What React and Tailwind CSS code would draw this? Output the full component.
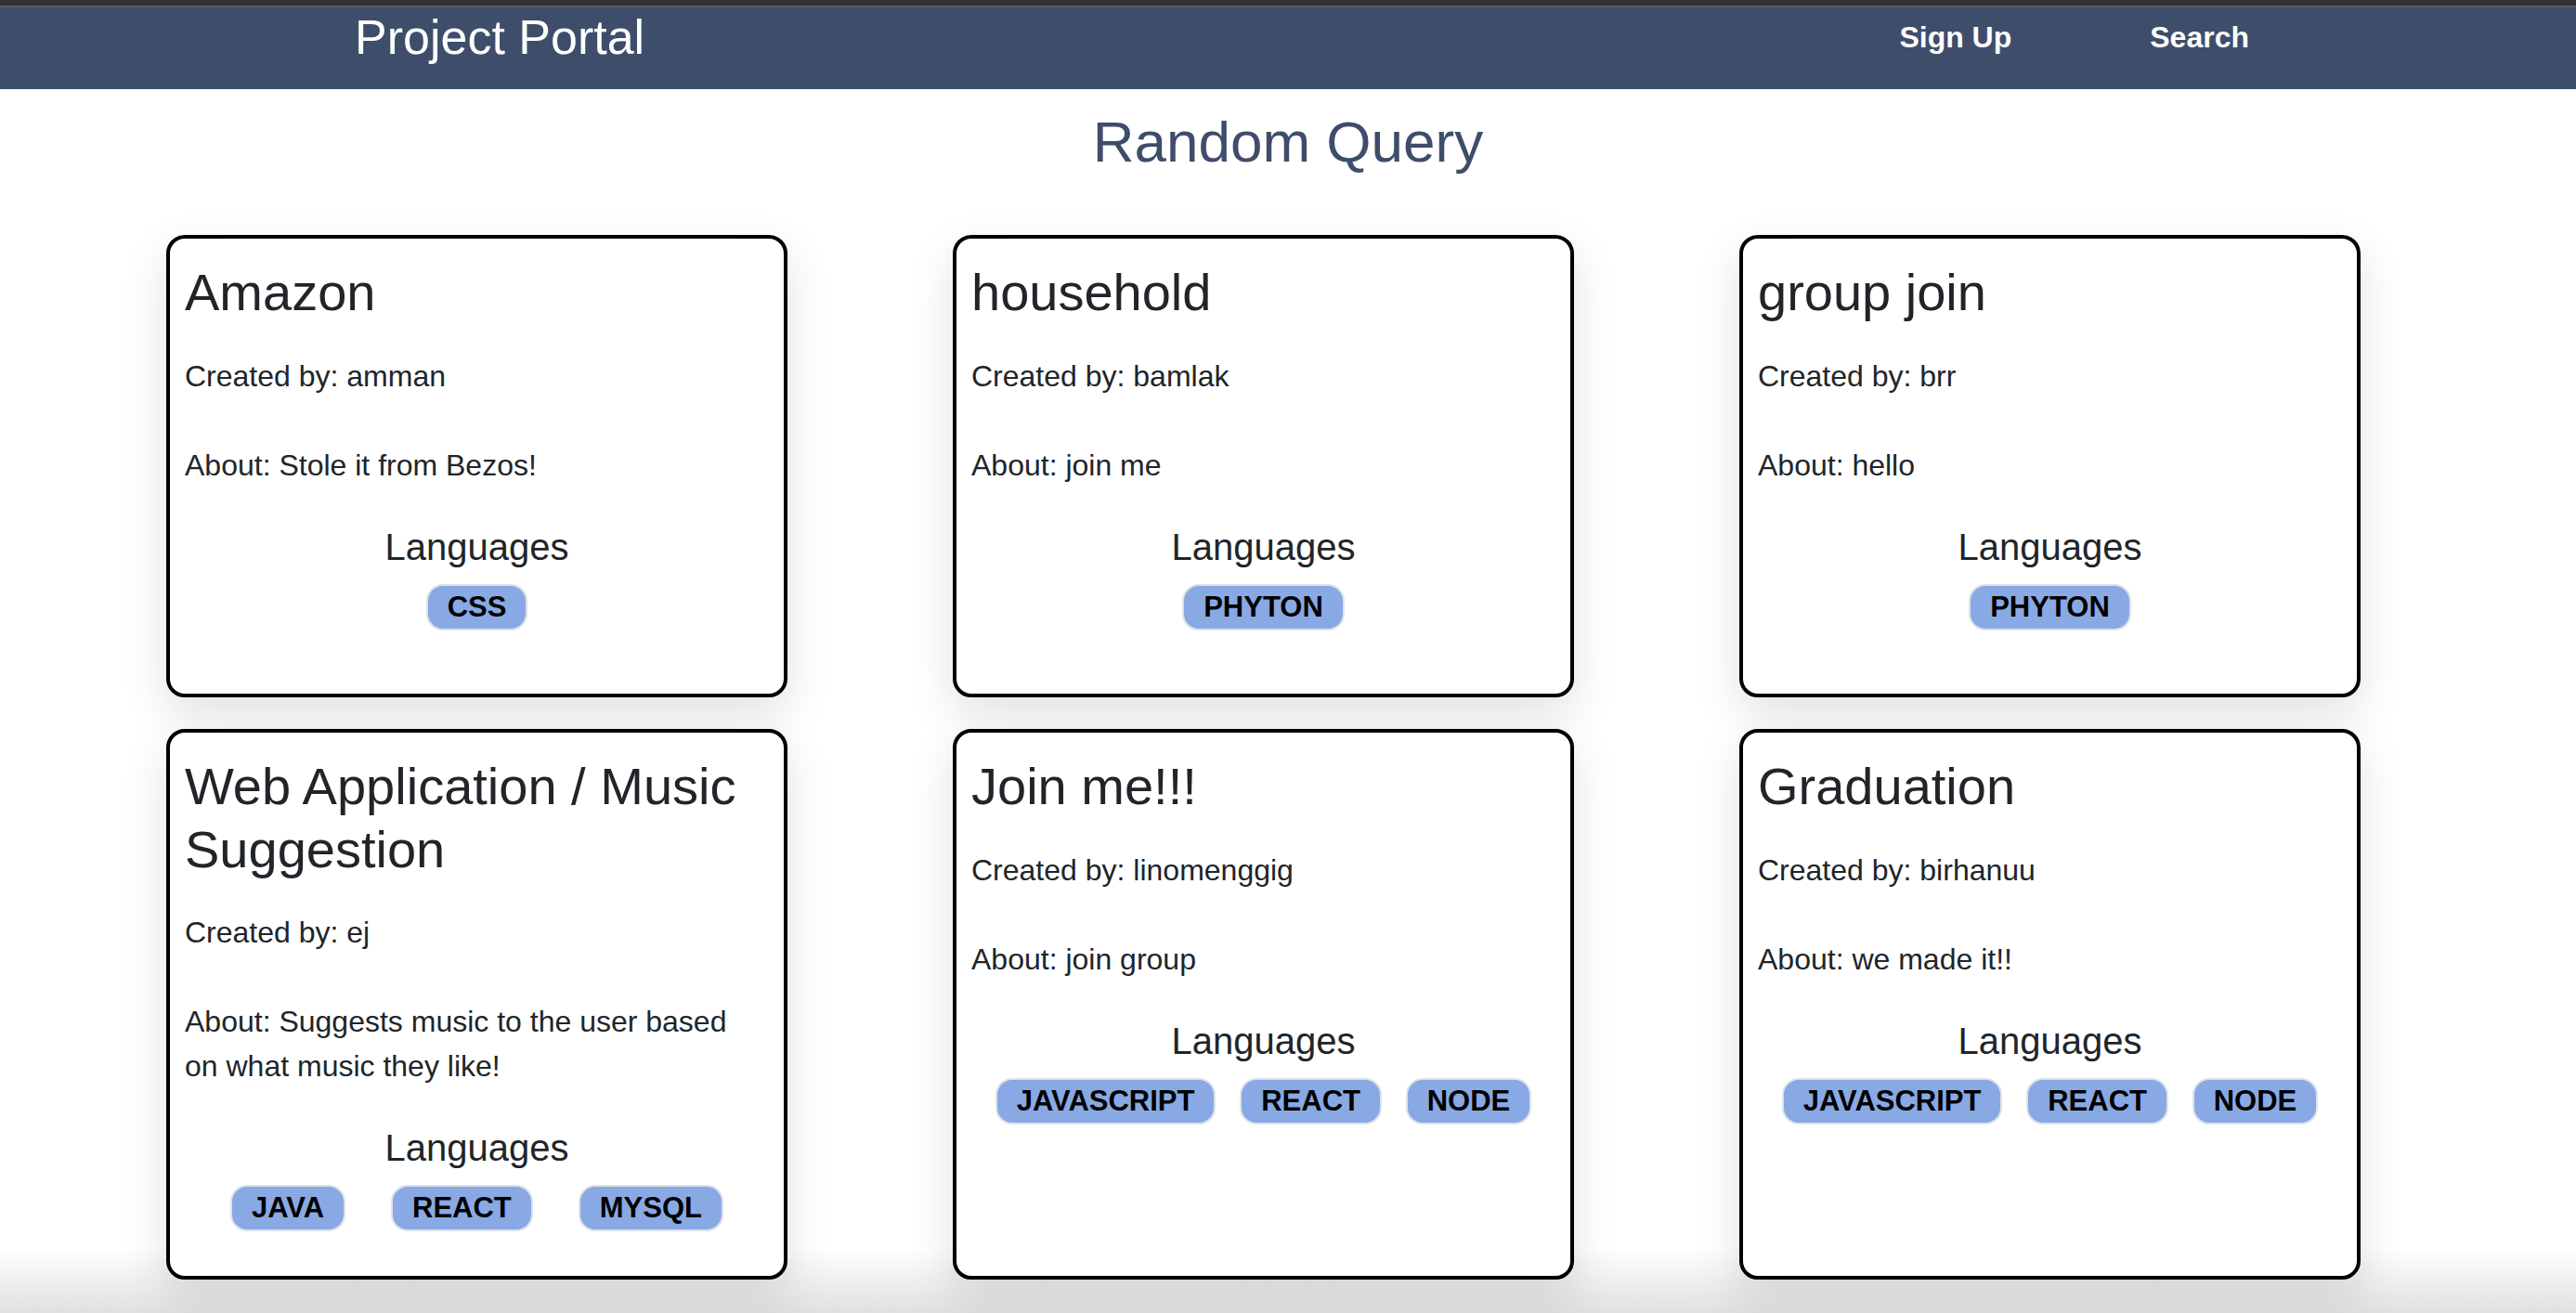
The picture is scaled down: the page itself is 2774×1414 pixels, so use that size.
import React from 'react';

const projects = [
  { title: 'Amazon', creator: 'amman', about: 'Stole it from Bezos!', langs: ['CSS'] },
  { title: 'household', creator: 'bamlak', about: 'join me', langs: ['PHYTON'] },
  { title: 'group join', creator: 'brr', about: 'hello', langs: ['PHYTON'] },
  {
    title: 'Web Application / Music Suggestion',
    creator: 'ej',
    about: 'Suggests music to the user based on what music they like!',
    langs: ['JAVA', 'REACT', 'MYSQL'],
  },
  { title: 'Join me!!!', creator: 'linomenggig', about: 'join group', langs: ['JAVASCRIPT', 'REACT', 'NODE'] },
  { title: 'Graduation', creator: 'birhanuu', about: 'we made it!!', langs: ['JAVASCRIPT', 'REACT', 'NODE'] },
];

const ProjectCard = ({ project }) => {
  return (
    <div className="flex flex-col min-h-[498px] bg-white border-4 border-black rounded-[20px] px-[16px] pt-[24px] pb-[16px] text-[#212529] shadow-[0_18px_50px_rgba(0,0,0,0.12)]">
      <h3 className="text-[56px] leading-[1.2] font-medium mb-[32px]">{project.title}</h3>
      <p className="text-[32px] leading-[1.5] mb-[48px]">Created by: {project.creator}</p>
      <p className="text-[32px] leading-[1.5] pr-[14px]">About: {project.about}</p>
      <h5 className="text-[40px] leading-[1.2] font-medium text-center mt-[40px] mb-[16px]">Languages</h5>
      <div className="flex flex-wrap justify-evenly mb-[32px]">
        {project.langs.map((lang) => (
          <span
            key={lang}
            className="h-[50px] flex items-center px-[21px] rounded-[18px] border-2 border-[#dde2ea] bg-[#89a9e4] text-black text-[31px] font-bold leading-none"
          >
            {lang}
          </span>
        ))}
      </div>
    </div>
  );
};

const App = () => {
  return (
    <div className="h-screen overflow-hidden bg-[linear-gradient(to_bottom,#ffffff_calc(100%-70px),#e0e0e0)] font-['Liberation_Sans',Arial,sans-serif]">
      <div className="h-[6px] bg-[#333336]"></div>
      <div className="h-[2px] bg-[#5b5b5d]"></div>
      <nav className="h-[88px] bg-[#3e4e6a] pt-[6px] pl-[382px] pr-[352px]">
        <div className="h-[52px] flex items-center">
          <span className="text-[52px] leading-none text-white">Project Portal</span>
          <div className="ml-auto flex items-center gap-[149px]">
            <a className="text-[32px] leading-none font-bold text-white">Sign Up</a>
            <a className="text-[32px] leading-none font-bold text-white">Search</a>
          </div>
        </div>
      </nav>

      <h2 className="mt-[20px] text-center text-[62px] leading-[1.2] font-medium text-[#3e4d6a]">Random Query</h2>

      <div className="mt-[63px] pl-[179px] grid grid-cols-[repeat(3,669px)] gap-x-[178px] gap-y-[34px]">
        {projects.map((project) => (
          <ProjectCard key={project.title} project={project} />
        ))}
      </div>
    </div>
  );
};

export default App;
